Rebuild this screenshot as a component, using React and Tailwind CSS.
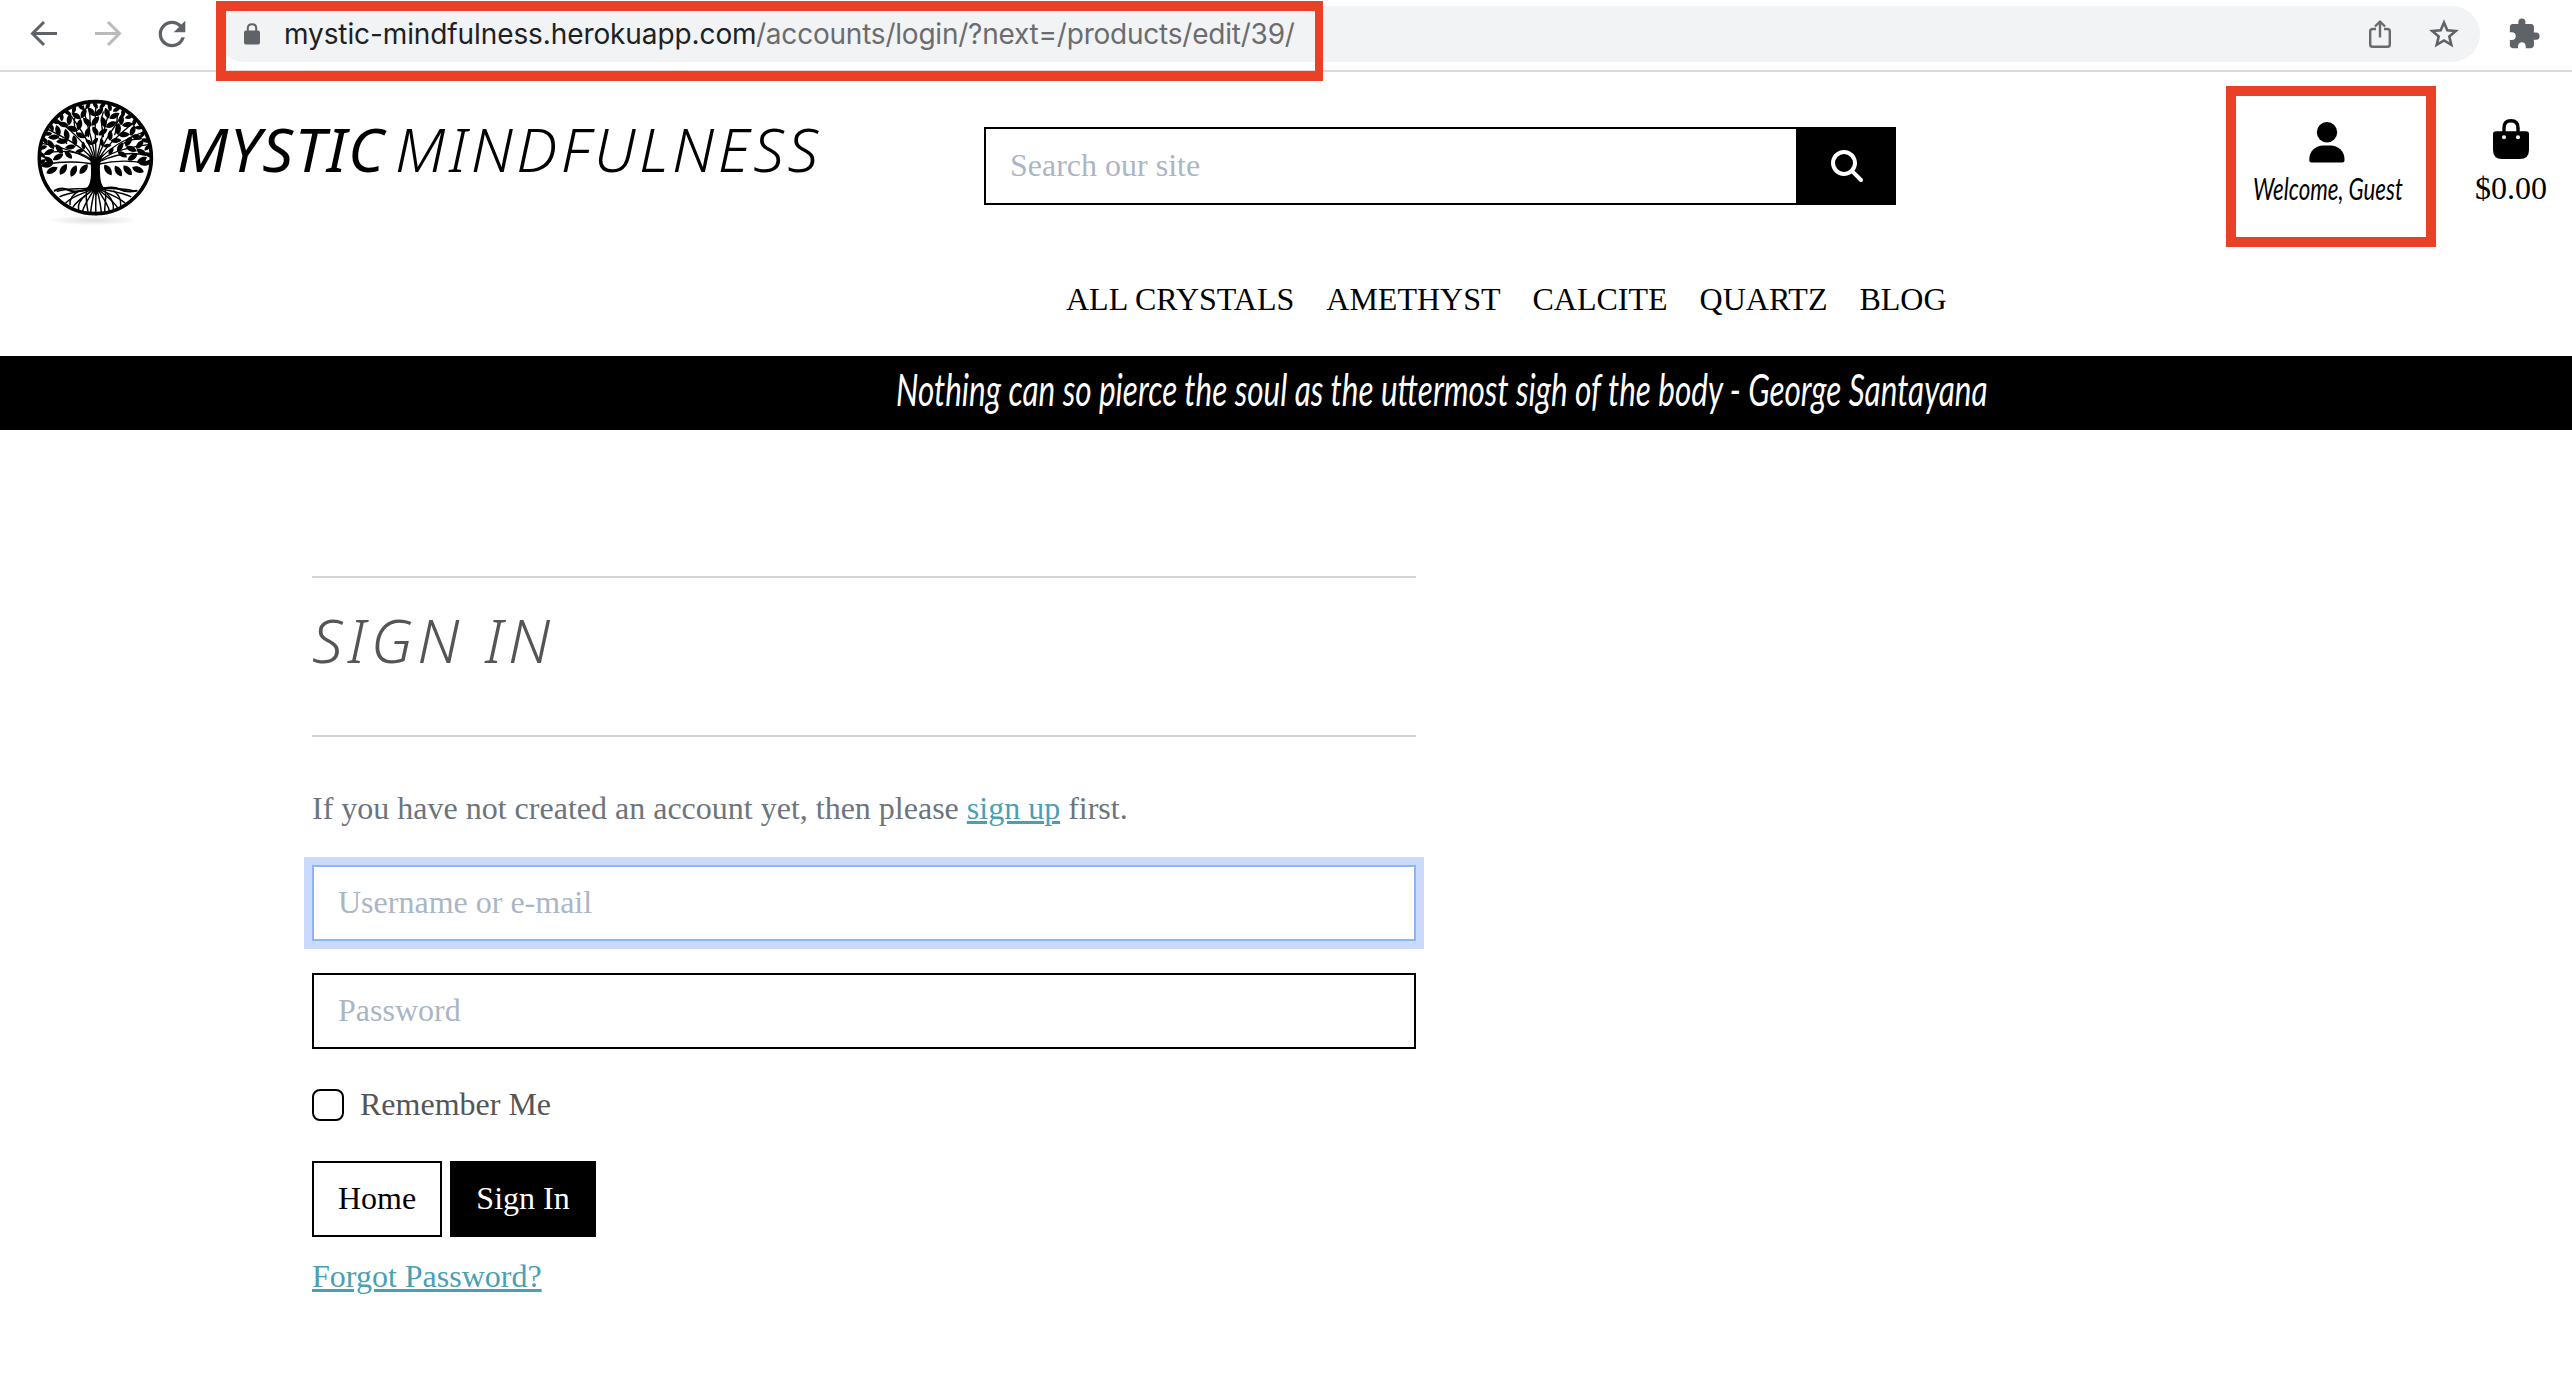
import React from "react";
import { MdRefresh, MdExtension } from "react-icons/md";

const leafRings = [
  { r: 52, n: 7, from: 205, to: 335, s: 0.75 },
  { r: 82, n: 11, from: 188, to: 352, s: 0.95 },
  { r: 112, n: 15, from: 182, to: 358, s: 1.05 },
  { r: 140, n: 20, from: 178, to: 362, s: 1.0 },
  { r: 160, n: 25, from: 176, to: 364, s: 0.75 },
];

const leaves = leafRings.flatMap((ring, k) =>
  Array.from({ length: ring.n }, (_, i) => {
    const deg = ring.from + ((ring.to - ring.from) * i) / (ring.n - 1);
    const a = (deg * Math.PI) / 180;
    const tilt = (i + k) % 2 ? 38 : -32;
    return {
      x: 226 + Math.cos(a) * ring.r,
      y: 205 + Math.sin(a) * ring.r,
      rot: deg + tilt,
      s: ring.s,
    };
  })
);

const branches = [
  "M218 215C200 190 140 175 75 190",
  "M218 215C190 195 130 170 66 160",
  "M218 210C200 180 150 150 84 118",
  "M220 208C205 170 165 130 108 86",
  "M222 206C212 160 180 115 142 62",
  "M225 206C222 160 200 110 190 48",
  "M228 206C228 150 222 110 228 42",
  "M231 206C238 160 258 110 270 50",
  "M234 206C244 165 280 115 312 66",
  "M236 208C255 170 300 130 348 92",
  "M238 210C260 180 310 150 370 126",
  "M238 215C265 190 320 172 385 164",
  "M238 215C260 205 320 180 378 196",
  "M176 138C165 120 160 100 164 84",
  "M205 140C208 110 214 90 208 66",
  "M250 140C246 110 240 90 250 66",
  "M284 134C292 112 290 92 292 80",
  "M140 160C120 140 104 138 88 142",
  "M312 160C330 146 346 148 362 146",
];

const lowLeaves = [
  [96, 241, -28], [130, 238, -58], [161, 243, -65], [191, 237, -50],
  [264, 240, 55], [295, 243, 58], [323, 241, 48], [354, 239, 22],
  [82, 224, -10], [370, 218, 14],
];

const roots = [
  "M212 292C190 300 150 292 112 304",
  "M214 296C180 306 150 306 120 320",
  "M214 298C190 312 160 316 138 338",
  "M216 300C200 318 176 326 160 350",
  "M220 302C208 324 196 338 188 362",
  "M224 302C218 326 214 344 212 368",
  "M228 302C228 326 226 346 228 374",
  "M232 302C238 326 242 344 244 368",
  "M236 302C248 324 262 338 268 362",
  "M238 300C256 318 276 328 292 352",
  "M240 298C264 312 290 318 314 338",
  "M242 296C272 304 306 306 332 320",
  "M244 292C270 300 310 292 344 304",
  "M176 303C160 312 148 328 150 344",
  "M196 316C180 330 172 342 176 358",
  "M200 302C196 322 200 340 204 366",
  "M256 302C260 322 254 342 254 366",
  "M262 312C278 330 282 342 280 358",
  "M282 303C296 314 304 328 302 346",
];

function TreeLogo() {
  return (
    <svg viewBox="0 0 450 420" className="h-[140px] w-[150px] shrink-0">
      <defs>
        <radialGradient id="shade">
          <stop offset="0" stopColor="#000" stopOpacity="0.13" />
          <stop offset="1" stopColor="#000" stopOpacity="0" />
        </radialGradient>
      </defs>
      <ellipse cx="220" cy="391" rx="140" ry="15" fill="url(#shade)" />
      <circle cx="226" cy="203" r="168" fill="#fff" stroke="#000" strokeWidth="11" />
      <path
        d="M204 190C216 200 222 206 226 200C230 206 240 200 252 190C242 208 239 222 240 245C241 270 242 286 258 298C240 300 234 306 228 318C222 306 214 300 196 298C210 286 213 270 213 245C213 222 212 208 204 190Z"
        fill="#000"
      />
      <g fill="none" stroke="#000" strokeWidth="4" strokeLinecap="round">
        {branches.map((d) => (
          <path key={d} d={d} />
        ))}
        <path d="M216 222C190 216 130 212 84 222M238 222C270 214 320 210 372 218" />
      </g>
      <g fill="none" stroke="#000" strokeWidth="4.5" strokeLinecap="round">
        {roots.map((d) => (
          <path key={d} d={d} />
        ))}
        <path d="M104 302Q125 290 145 300T205 296M248 296Q280 288 300 298T350 302" strokeWidth="6" />
      </g>
      <g fill="#000">
        {leaves.map((l, i) => (
          <path
            key={i}
            d="M-17 0C-9 -10 6 -11 17 0C6 11 -9 10 -17 0Z"
            transform={`translate(${l.x} ${l.y}) rotate(${l.rot}) scale(${l.s})`}
          />
        ))}
        {lowLeaves.map(([x, y, r]) => (
          <path
            key={x}
            d="M-19 0C-9 -12 8 -12 19 0C8 12 -9 12 -19 0Z"
            transform={`translate(${x} ${y}) rotate(${r})`}
          />
        ))}
      </g>
    </svg>
  );
}

function BrowserBar() {
  return (
    <div className="relative flex h-[72px] items-center border-b-2 border-[#dadada] bg-white pb-[2px] pl-7 text-[#5f6368]">
      <svg viewBox="0 0 32 32" className="size-8" fill="none" stroke="currentColor" strokeWidth="3">
        <path d="M29 15.5H5M16 4L4.5 15.5L16 27" />
      </svg>
      <svg viewBox="0 0 32 32" className="ml-8 size-8 text-[#bababa]" fill="none" stroke="currentColor" strokeWidth="3">
        <path d="M3 15.5H27M16 4L27.5 15.5L16 27" />
      </svg>
      <MdRefresh className="ml-7 size-10" />
      <div className="ml-[24px] flex h-14 w-[2264px] items-center rounded-full bg-[#f1f3f4] pl-7 pr-[20px]">
        <svg viewBox="0 0 16 22" className="h-[22px] w-4">
          <rect x="0" y="7.500" width="16" height="14" rx="2" fill="currentColor" />
          <path d="M3.800 9V5Q3.800 1.200 8 1.200T12.200 5V9" fill="none" stroke="currentColor" strokeWidth="2" />
        </svg>
        <div className="ml-6 flex font-[Inter] text-[28px]">
          <span className="w-[472px] whitespace-nowrap tracking-[-0.1px] text-[#202124]">mystic-mindfulness.herokuapp.com</span>
          <span className="whitespace-nowrap tracking-[-0.22px] text-[#6b6c6f]">/accounts/login/?next=/products/edit/39/</span>
        </div>
        <svg viewBox="0 0 24 30" className="ml-auto h-[30px] w-6 text-[#6a6a6c]" fill="none" stroke="currentColor" strokeWidth="2.4" strokeLinejoin="round">
          <path d="M8 10H4.5Q2.2 10 2.2 12.300V25.500Q2.2 27.800 4.500 27.800H19.500Q21.800 27.800 21.800 25.500V12.300Q21.800 10 19.500 10H16M12 18.500V3M7 7.500L12 2.500L17 7.500" />
        </svg>
        <svg viewBox="0 0 32 32" className="ml-9 size-8 text-[#5f6368]" fill="none" stroke="currentColor" strokeWidth="2.600">
          <path d="M16 4.500L19.300 12.300L27.700 13L21.300 18.500L23.300 26.800L16 22.400L8.700 26.800L10.700 18.500L4.300 13L12.700 12.300Z" />
        </svg>
      </div>
      <MdExtension className="ml-[27px] size-[34px]" />
      <div className="absolute left-[216px] top-px h-20 w-[1107px] border-x-8 border-y-10 border-l-10 border-[#ea4025]" />
    </div>
  );
}

function Header() {
  return (
    <header className="h-[284px] text-black">
      <div className="flex h-[202px] items-start pl-5">
        <div className="mt-[18px] flex w-[964px]">
          <TreeLogo />
          <h1 className="ml-[7px] mt-[17px] flex whitespace-nowrap font-['Noto_Sans'] text-[61px] leading-[84px] font-light italic">
            <span className="w-[218px] font-normal tracking-[1.500px]">MYSTIC</span>
            <span className="tracking-[3.500px]">MINDFULNESS</span>
          </h1>
        </div>
        <div className="mt-[55px] flex h-[78px] w-[912px]">
          <div className="flex flex-1 items-center border-2 border-black pb-[2px] pl-6 text-[32px] leading-none text-[#abb6c5]">
            <span>Search our site</span>
          </div>
          <div className="flex w-[98px] items-center justify-center bg-black">
            <svg viewBox="0 0 512 512" className="size-8" fill="#fff">
              <path d="M416 208c0 45.900-14.900 88.300-40 122.700L502.600 457.400c12.500 12.500 12.500 32.800 0 45.300s-32.800 12.500-45.300 0L330.700 376c-34.400 25.200-76.800 40-122.700 40C93.100 416 0 322.900 0 208S93.100 0 208 0S416 93.100 416 208zM208 352a144 144 0 1 0 0-288a144 144 0 1 0 0 288z" />
            </svg>
          </div>
        </div>
        <div className="relative ml-[330px] mt-[14px] flex h-[161px] w-[210px] flex-col items-center border-10 border-[#ea4025] pt-[26px]">
          <svg viewBox="0 0 36 41" className="mr-2 h-[41px] w-9">
            <circle cx="18" cy="10.200" r="10.200" />
            <path d="M.300 37C.300 29 7 23.500 14 23.500H21.500C29 23.500 35.500 29 35.500 37V38.500Q35.500 40.500 33.500 40.500H2.300Q.300 40.500 .300 38.500Z" />
          </svg>
          <div className="mt-[7px] h-9 w-[156px] whitespace-nowrap font-[Lato] text-[30px] leading-9 italic">
            <span className="inline-block origin-left scale-x-[0.742]">Welcome, Guest</span>
          </div>
        </div>
        <div className="ml-[39px] mt-[47px] flex w-[72px] flex-col items-center">
          <svg viewBox="0 0 36 40" className="h-10 w-9">
            <path d="M0 15Q0 12.300 3 12.300H33Q36 12.300 36 15V31Q36 40 27 40H9Q0 40 0 31Z" />
            <path d="M11 18V9Q11 1.800 18 1.800T25 9V18" fill="none" stroke="#000" strokeWidth="3.400" />
            <circle cx="11" cy="18.300" r="2" fill="#fff" />
            <circle cx="25" cy="18.300" r="2" fill="#fff" />
          </svg>
          <span className="mt-[5px] text-[32px] leading-12">$0.00</span>
        </div>
      </div>
      <nav className="flex gap-8 pl-[1066px] text-[32px] leading-[50px]">
        <a>ALL CRYSTALS</a>
        <a>AMETHYST</a>
        <a>CALCITE</a>
        <a>QUARTZ</a>
        <a>BLOG</a>
      </nav>
    </header>
  );
}

export default function App() {
  return (
    <div className="h-[1374px] w-[2572px] overflow-hidden bg-white font-['Liberation_Serif',serif]">
      <BrowserBar />
      <Header />
      <div className="h-[74px] whitespace-nowrap bg-black pl-[896px] font-[Lato] text-[44px] leading-[66px] text-white italic">
        <span className="inline-block origin-left scale-x-[0.716]">
          Nothing can so pierce the soul as the uttermost sigh of the body - George Santayana
        </span>
      </div>
      <main className="ml-[312px] mt-[146px] w-[1104px] text-[32px] leading-12 text-[#555]">
        <div className="h-[161px] border-y-2 border-[#d4d4d4] pt-[20px]">
          <h2 className="font-['Noto_Sans'] text-[61px] leading-[84px] font-light tracking-[4.800px] italic">SIGN IN</h2>
        </div>
        <p className="mt-[47px] text-[#6c757d]">
          If you have not created an account yet, then please <a className="text-[#4a9fb5] underline decoration-[3px] underline-offset-[2px]">sign up</a> first.
        </p>
        <div className="mt-[33px] flex h-[76px] items-center border-2 border-[#8cb4f8] pb-[2px] pl-6 text-[#abb6c5] shadow-[0_0_0_8px_#cbd9fb]">
          Username or e-mail
        </div>
        <div className="mt-8 flex h-[76px] items-center border-2 border-black pb-[2px] pl-6 text-[#abb6c5]">Password</div>
        <div className="mt-8 flex h-12 items-center gap-4">
          <span className="size-8 rounded-lg border-2 border-black" />
          <span className="pb-[2px]">Remember Me</span>
        </div>
        <div className="mt-8 flex gap-2">
          <button className="h-[76px] w-[130px] border-2 border-black pb-[2px] text-black">Home</button>
          <button className="h-[76px] w-[146px] bg-black pb-[2px] text-white">Sign In</button>
        </div>
        <a className="mt-[15px] block text-[#4a9fb5] underline decoration-[3px] underline-offset-[2px]">Forgot Password?</a>
      </main>
    </div>
  );
}
